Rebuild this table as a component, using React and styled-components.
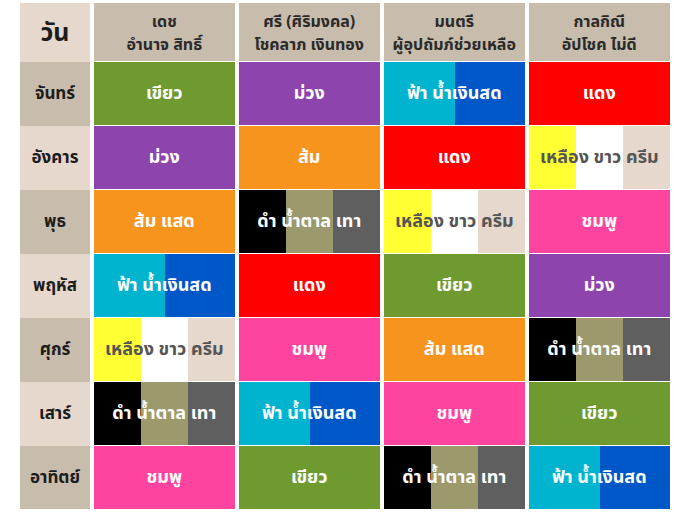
import { styled, createGlobalStyle } from "styled-components";

const GlobalStyle = createGlobalStyle`
body {
  margin: 0;
  background: #ffffff;
  font-family: "Noto Sans Thai", "Noto Sans", "Liberation Sans", sans-serif;
}
`

const palette = {
  green: "#6e9a30",
  purple: "#8e44ad",
  orange: "#f7941d",
  sky: "#00b4d0",
  blue: "#0058c8",
  red: "#ff0000",
  yellow: "#ffff33",
  white: "#ffffff",
  cream: "#e6d8cc",
  black: "#000000",
  olive: "#9c9a6c",
  gray: "#5f5f5f",
  pink: "#ff44a0",
}

const swatches = {
  green: { label: "เขียว", colors: ["green"] },
  purple: { label: "ม่วง", colors: ["purple"] },
  orange: { label: "ส้ม", colors: ["orange"] },
  orangeRed: { label: "ส้ม แสด", colors: ["orange"] },
  blue: { label: "ฟ้า น้ำเงินสด", colors: ["sky", "blue"] },
  red: { label: "แดง", colors: ["red"] },
  light: { label: "เหลือง ขาว ครีม", colors: ["yellow", "white", "cream"], dark: true },
  dark: { label: "ดำ น้ำตาล เทา", colors: ["black", "olive", "gray"] },
  pink: { label: "ชมพู", colors: ["pink"] },
}

const headers = [
  ["เดช", "อำนาจ สิทธิ์"],
  ["ศรี (ศิริมงคล)", "โชคลาภ เงินทอง"],
  ["มนตรี", "ผู้อุปถัมภ์ช่วยเหลือ"],
  ["กาลกิณี", "อัปโชค ไม่ดี"],
]

const rows = [
  ["จันทร์", ["green", "purple", "blue", "red"]],
  ["อังคาร", ["purple", "orange", "red", "light"]],
  ["พุธ", ["orangeRed", "dark", "light", "pink"]],
  ["พฤหัส", ["blue", "red", "green", "purple"]],
  ["ศุกร์", ["light", "pink", "orangeRed", "dark"]],
  ["เสาร์", ["dark", "blue", "pink", "green"]],
  ["อาทิตย์", ["pink", "green", "dark", "blue"]],
]

const stripes = (colors) => {
  if (colors.length === 1) return palette[colors[0]]
  const step = 100 / colors.length
  const stops = colors
    .map((c, i) => `${palette[c]} ${i * step}%, ${palette[c]} ${(i + 1) * step}%`)
    .join(", ")
  return `linear-gradient(to right, ${stops})`
}

const App = () => {
  return (
    <>
      <GlobalStyle />
      <Page>
        <Table>
          <DayCell $light $title>วัน</DayCell>
          {headers.map((lines) => (
            <HeadCell key={lines[0]}>
              {lines.map((l) => (
                <span key={l}>{l}</span>
              ))}
            </HeadCell>
          ))}
          {rows.map(([day, cells], r) => (
            <Row key={day}>
              <DayCell $light={r % 2 === 1}>{day}</DayCell>
              {cells.map((key, i) => {
                const s = swatches[key]
                return (
                  <ColorCell key={i} $bg={stripes(s.colors)} $dark={s.dark}>
                    {s.label}
                  </ColorCell>
                )
              })}
            </Row>
          ))}
        </Table>
      </Page>
    </>
  )
}

export default App

const Page = styled.div`
padding: 3px 0 0 20px;
`

const Table = styled.div`
display: grid;
width: 650px;
grid-template-columns: 70px repeat(4, 1fr);
grid-template-rows: 58px repeat(7, 63px);
column-gap: 3.5px;
row-gap: 1px;
`

const Row = styled.div`
display: contents;
`

const DayCell = styled.div`
display: flex;
align-items: center;
justify-content: center;
background: ${(p) => (p.$light ? "#e6d8cc" : "#c8bcac")};
color: #1c1c1c;
font-weight: 700;
font-size: ${(p) => (p.$title ? "25px" : "17px")};
margin-bottom: -1px;
`

const HeadCell = styled.div`
display: flex;
flex-direction: column;
align-items: center;
justify-content: center;
padding-top: 3px;
background: #c8bcac;
color: #2a2a2a;
font-weight: 700;
font-size: 16px;
line-height: 23px;
white-space: nowrap;
`

const ColorCell = styled.div`
display: flex;
align-items: center;
justify-content: center;
background: ${(p) => p.$bg};
color: ${(p) => (p.$dark ? "#555555" : "#ffffff")};
font-weight: 700;
font-size: 18px;
white-space: nowrap;
`
